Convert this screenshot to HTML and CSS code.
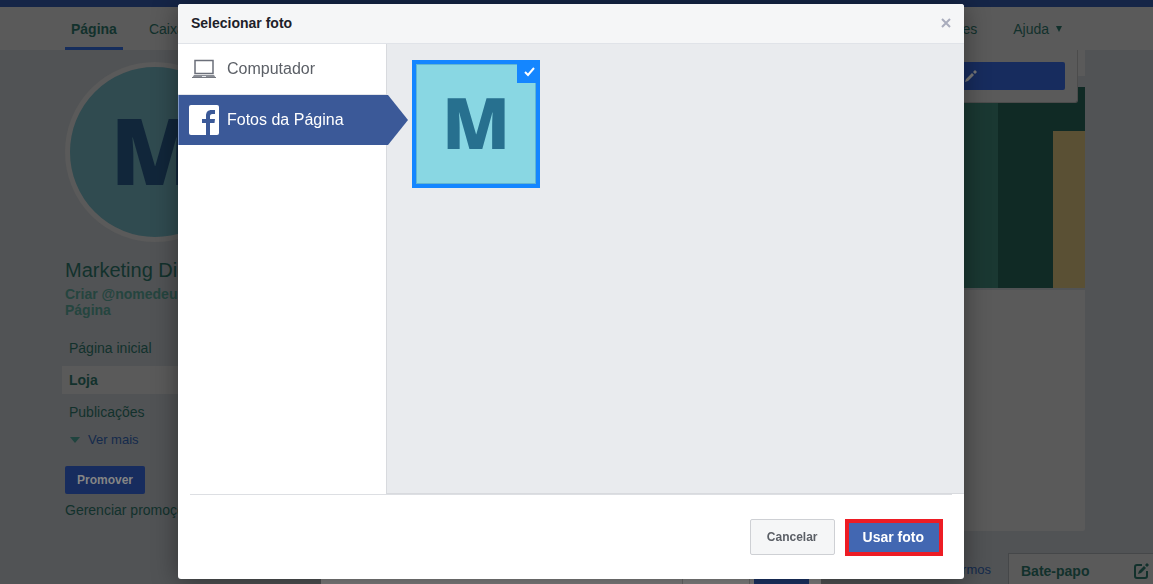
FILE: index.html
```
<!DOCTYPE html>
<html lang="pt-BR">
<head>
    <meta charset="UTF-8">
    <meta name="viewport" content="width=device-width, initial-scale=1.0">
    <title>Selecionar foto</title>
    <link rel="stylesheet" href="styles.css">
</head>
<body>
    <div class="page">
        <div class="topbar"></div>
        <nav class="tabs">
            <a href="#" class="tab active">Página</a>
            <a href="#" class="tab">Caixa</a>
            <a href="#" class="tab tab-right">Configurações</a>
            <a href="#" class="tab">Ajuda <svg class="caret" viewBox="0 0 6 6"><path d="M0 0h6L3 6z"/></svg></a>
        </nav>
        <main class="content">
            <aside class="profile">
                <div class="avatar">M</div>
                <h1>Marketing Digital</h1>
                <a href="#" class="username">Criar @nomedeusuário da Página</a>
                <ul class="menu">
                    <li><a href="#">Página inicial</a></li>
                    <li><a href="#" class="active">Loja</a></li>
                    <li><a href="#">Publicações</a></li>
                </ul>
                <a href="#" class="more"><svg viewBox="0 0 10 6"><path d="M0 0h10L5 6z"/></svg>Ver mais</a>
                <button type="button" class="promote">Promover</button>
                <a href="#" class="manage">Gerenciar promoções</a>
            </aside>
            <section class="feed">
                <div class="feed-top"></div>
                <div class="cover">
                    <span class="band"></span>
                    <span class="block"></span>
                </div>
                <div class="posts"></div>
                <div class="popover">
                    <button type="button" class="edit" aria-label="Editar">
                        <svg viewBox="0 0 12 12"><path d="M0 12l1-3 6-6 2 2-6 6zM8 2l2-2 2 2-2 2z"/></svg>
                    </button>
                </div>
            </section>
        </main>
        <a href="#" class="terms">Termos</a>
        <button type="button" class="chat">
            Bate-papo
            <svg viewBox="0 0 16 16"><path d="M9 2H4a2 2 0 0 0-2 2v9a2 2 0 0 0 2 2h8a2 2 0 0 0 2-2V8"/><path d="M5 11l1-3 5-5 2 2-5 5zM12 2l2-2 2 2-2 2z" class="fill"/></svg>
        </button>
        <div class="back-dialog">
            <span class="back-cancel"></span>
            <span class="back-save"></span>
        </div>
    </div>

    <div class="overlay">
        <div class="modal" role="dialog" aria-labelledby="modal-title">
            <header class="modal-header">
                <h2 id="modal-title">Selecionar foto</h2>
                <button type="button" class="close" aria-label="Fechar">
                    <svg viewBox="0 0 10 10"><path d="M1 1l8 8M9 1l-8 8"/></svg>
                </button>
            </header>
            <div class="modal-body">
                <div class="sources">
                    <button type="button" class="source">
                        <svg viewBox="0 0 30 30">
                            <path d="M6 6.500h18v13H6z" fill="none" stroke="#6b6f7a" stroke-width="1.500"/>
                            <path d="M5 21h20l2 3H3z" fill="#8a8d95"/>
                            <path d="M13 22h4v1h-4z" fill="#e5e7ec"/>
                            <path d="M3 23h24v1H3z" fill="#74777f"/>
                        </svg>
                        Computador
                    </button>
                    <button type="button" class="source selected">
                        <svg viewBox="0 0 30 30">
                            <rect width="30" height="30" rx="2" fill="#fff"/>
                            <path d="M17 30V18h-4v-4h4v-3c0-4 2-6 5.500-6H26v4h-2.500C21.500 9 21 10 21 11.500V14h5l-.5 4H21v12z" fill="#3b5998"/>
                        </svg>
                        Fotos da Página
                    </button>
                </div>
                <div class="photos">
                    <label class="photo">
                        <input type="checkbox" aria-label="Foto M" checked>
                        <span class="letter">M</span>
                        <svg class="tick" viewBox="0 0 23 23"><path d="M8 12l3 3 6-7"/></svg>
                    </label>
                </div>
            </div>
            <footer class="modal-footer">
                <button type="button" class="cancel">Cancelar</button>
                <button type="button" class="confirm">Usar foto</button>
            </footer>
        </div>
    </div>
</body>
</html>
```

FILE: styles.css
```
* { box-sizing: border-box; }
body { margin: 0; font-family: "Liberation Sans", Arial, sans-serif; font-size: 14px; background: #515355; color: #12312c; }
a { color: inherit; text-decoration: none; }
button { font-family: inherit; border: 0; margin: 0; padding: 0; cursor: pointer; }
svg { display: block; flex: none; }
.page { position: relative; height: 100vh; overflow: hidden; }
.topbar { height: 7px; background: #152547; }
.tabs { display: flex; height: 43px; padding: 0 85px 0 65px; background: #5a5a5a; }
.tab { display: flex; align-items: center; padding: 4px 6px 0; border-bottom: 3px solid transparent; margin-right: 20px; white-space: nowrap; }
.tab.active { font-weight: bold; border-color: #162d5c; }
.tab-right { margin-left: auto; margin-right: 24px; }
.tab:last-child { margin-right: 0; }
.caret { width: 6px; height: 6px; margin-left: 7px; fill: #12312c; }
.content { display: flex; padding: 0 68px 0 65px; }
.profile { display: flex; flex-direction: column; align-items: flex-start; width: 180px; padding-top: 12px; }
.avatar { display: flex; align-items: center; justify-content: center; width: 180px; height: 180px; padding-bottom: 5px; border: 5px solid #5a5a5a; border-radius: 50%; background: #304b50; color: #11263a; font-family: "Open Sans", sans-serif; font-size: 92px; font-weight: 800; line-height: 1; }
.profile h1 { margin: 16px 0 4px; font-size: 20px; font-weight: normal; line-height: 24px; white-space: nowrap; }
.username { font-weight: bold; line-height: 16px; color: #25453f; }
.menu { list-style: none; width: 100%; margin: 16px 0 0; padding: 0; }
.menu a { display: block; height: 28px; margin: 0 0 4px -3px; padding: 0 7px; line-height: 28px; }
.menu .active { background: #5a5a5a; font-weight: bold; }
.more { display: flex; align-items: center; gap: 8px; margin: 0 0 0 5px; font-size: 13px; line-height: 20px; color: #142a4c; }
.more svg { width: 10px; height: 6px; fill: #20443f; }
.promote { height: 28px; margin: 16px 0 6px; padding: 0 12px; border-radius: 2px; background: #172c5e; color: #858585; font-size: 12px; font-weight: bold; }
.manage { line-height: 20px; white-space: nowrap; }
.feed { position: relative; flex: 1; margin-left: 20px; }
.feed-top { height: 26px; background: #5a5a5a; }
.cover { display: flex; justify-content: flex-end; height: 201px; margin-top: 11px; background: #1a3832; }
.band { width: 55px; background: #102a25; }
.block { width: 32px; border-top: 44px solid #102a25; background: #5a5034; }
.posts { height: 241px; margin-top: 2px; border-radius: 0 0 2px 2px; background: #5a5a5a; }
.popover { position: absolute; top: 0; right: 7px; width: 300px; padding: 12px; background: #5a5a5a; border: solid #4c4c4c; border-width: 0 1px 1px 0; border-radius: 0 0 3px 0; }
.edit { display: flex; align-items: center; justify-content: flex-end; width: 100%; height: 28px; padding-right: 88px; border-radius: 2px; background: #172c5e; }
.edit svg { width: 12px; height: 12px; fill: #777; }
.terms { position: absolute; right: 162px; bottom: 6px; font-size: 13px; line-height: 16px; color: #142a4c; }
.chat { position: absolute; right: 0; bottom: 0; display: flex; align-items: center; justify-content: space-between; width: 145px; height: 31px; padding: 3px 4px 0 12px; background: #5a5a5a; border: solid #454749; border-width: 1px 0 0 1px; color: #12312c; font-size: 14px; font-weight: bold; }
.chat svg { width: 16px; height: 16px; fill: none; stroke: #12312c; stroke-width: 2; }
.chat .fill { fill: #12312c; stroke: none; }
.back-dialog { position: absolute; left: 321px; right: 332px; bottom: 0; display: flex; justify-content: flex-end; gap: 4px; height: 12px; padding-right: 12px; background: #828282; }
.back-cancel { width: 68px; border: solid #6c6c6c; border-width: 0 1px; background: #868686; }
.back-save { width: 55px; background: #1c3467; }

.overlay { position: fixed; inset: 0; display: flex; padding: 4px 189px 5px 178px; }
.modal { display: flex; flex-direction: column; flex: 1; border-radius: 3px; background: #fff; box-shadow: 0 2px 26px rgba(0, 0, 0, 0.4); }
.modal-header { display: flex; align-items: center; justify-content: space-between; height: 40px; padding: 0 13px 2px; border-bottom: 1px solid #e0e3e8; border-radius: 3px 3px 0 0; background: #f5f6f7; }
.modal-header h2 { margin: 0; font-size: 14px; line-height: 18px; color: #1d2129; }
.close { background: none; }
.close svg { width: 10px; height: 10px; stroke: #a9adbd; stroke-width: 2; }
.modal-body { display: flex; flex: 1; }
.sources { width: 209px; border-right: 1px solid #d8dade; }
.source { position: relative; display: flex; align-items: center; gap: 8px; width: 100%; height: 51px; padding: 0 11px; background: #fff; border-bottom: 1px solid #e4e6ea; color: #5b5f66; font-size: 16px; }
.source svg { width: 30px; height: 30px; }
.source.selected { height: 50px; background: #3b5998; border: 0; border-left: 1px solid #7f97c8; padding-left: 10px; color: #fff; }
.source.selected::after { content: ""; position: absolute; top: 0; left: 100%; width: 22px; height: 50px; background: #3b5998; clip-path: polygon(0 0, 2px 0, 100% 50%, 2px 100%, 0 100%); }
.photos { flex: 1; padding: 16px 25px; border-bottom: 1px solid #d8dade; background: #e9ebee; }
.photo { position: relative; display: flex; align-items: center; justify-content: center; width: 128px; height: 128px; padding-bottom: 5px; border: 4px solid #1486ff; background: #89d7e3; cursor: pointer; }
.photo input { position: absolute; inset: 0; margin: 0; appearance: none; border: 1px solid #62b6d2; }
.letter { color: #27708f; font-family: "Open Sans", sans-serif; font-size: 70px; font-weight: 800; line-height: 1; }
.tick { position: absolute; top: -4px; right: -4px; width: 23px; height: 23px; background: #1486ff; fill: none; stroke: #fff; stroke-width: 2; }
.modal-footer { display: flex; align-items: center; justify-content: flex-end; gap: 10px; height: 85px; margin: 0 12px; padding-right: 9px; border-top: 1px solid #dddfe3; }
.cancel { height: 36px; padding: 0 16px; border: 1px solid #ced0d4; border-radius: 2px; background: #f5f6f7; color: #5b5f66; font-size: 12px; font-weight: bold; }
.confirm { height: 37px; padding: 0 15px 0 14px; border: 4px solid #ed1c24; background: #4267b2; color: #fff; font-size: 14px; font-weight: bold; }
```
